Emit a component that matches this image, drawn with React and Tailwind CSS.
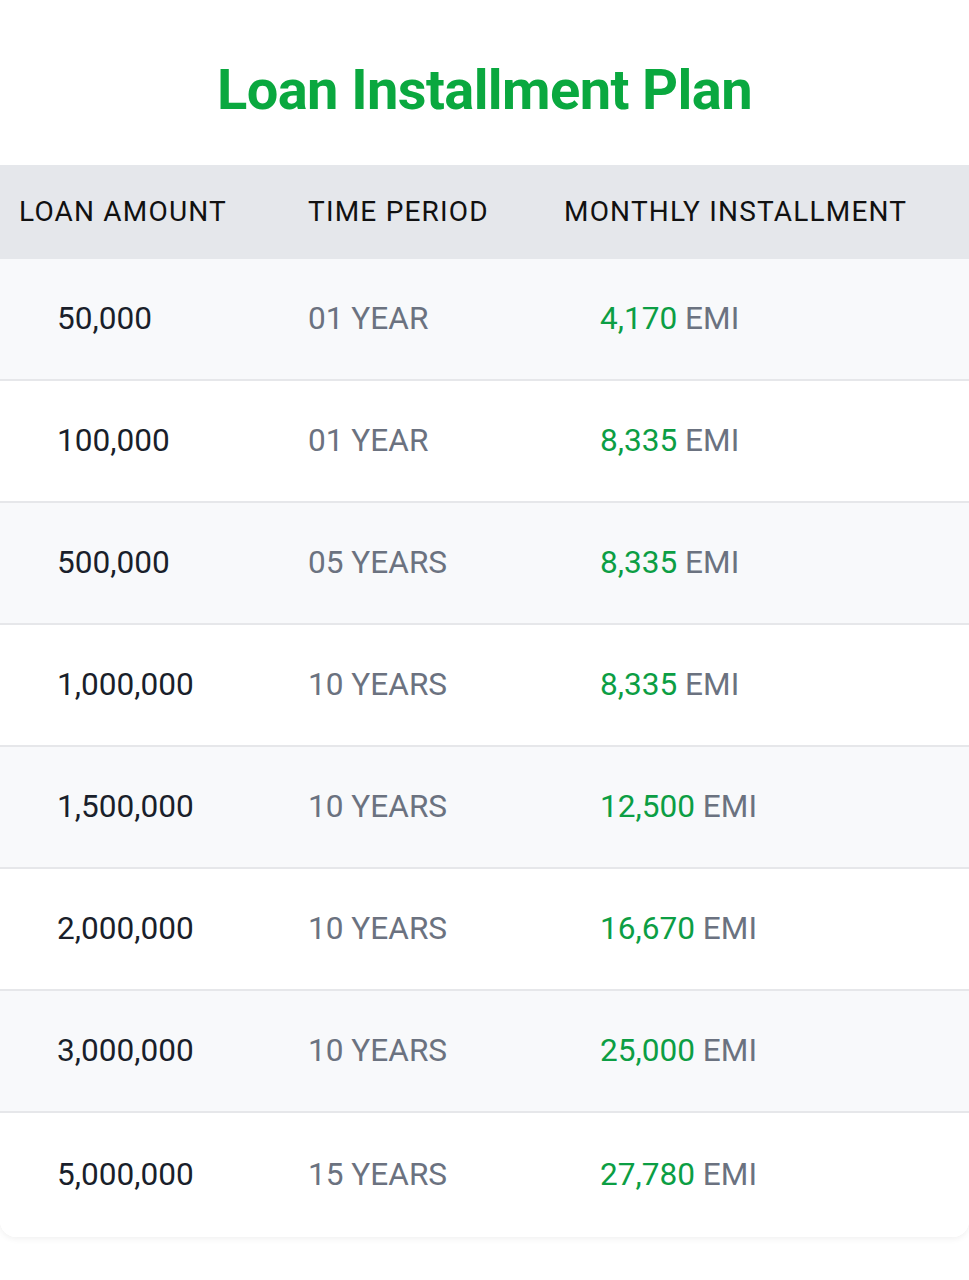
import React from 'react';

// installment rows
const rows = [
    { amount: '50,000', period: '01 YEAR', emi: '4,170' },
    { amount: '100,000', period: '01 YEAR', emi: '8,335' },
    { amount: '500,000', period: '05 YEARS', emi: '8,335' },
    { amount: '1,000,000', period: '10 YEARS', emi: '8,335' },
    { amount: '1,500,000', period: '10 YEARS', emi: '12,500' },
    { amount: '2,000,000', period: '10 YEARS', emi: '16,670' },
    { amount: '3,000,000', period: '10 YEARS', emi: '25,000' },
    { amount: '5,000,000', period: '15 YEARS', emi: '27,780' },
];

function App() {
    return (
        <div className="min-h-screen bg-white" style={{ fontFamily: 'Roboto, "Liberation Sans", sans-serif' }}>
            <div className="bg-white rounded-b-2xl shadow-[0_2px_6px_rgba(0,0,0,0.06)] overflow-hidden">
                {/* Title */}
                <div className="h-[165px] flex items-center justify-center pt-[14px]">
                    <h1 className="text-[56px] font-bold text-[#0aa83f] tracking-[-0.6px] leading-none">
                        Loan Installment Plan
                    </h1>
                </div>

                {/* Header */}
                <div className="grid grid-cols-[289px_256px_1fr] h-[94px] items-center bg-[#e5e7eb] text-[28px] tracking-[1.2px] text-[#111111] leading-none">
                    <div className="pl-[19px]">LOAN AMOUNT</div>
                    <div className="pl-[19px]">TIME PERIOD</div>
                    <div className="pl-[19px]">MONTHLY INSTALLMENT</div>
                </div>

                {/* Rows */}
                {rows.map((row, i) => (
                    <div
                        key={i}
                        className={
                            'grid grid-cols-[289px_256px_1fr] items-center text-[31.6px] leading-none ' +
                            (i % 2 === 0 ? 'bg-[#f8f9fb] ' : 'bg-white ') +
                            (i === rows.length - 1 ? 'h-[124px]' : 'h-[122px] border-b-2 border-[#e6e7ea]')
                        }
                    >
                        <div className="pl-[57px] text-[#1a1f2b]">{row.amount}</div>
                        <div className="pl-[19px] text-[#6b7280]">{row.period}</div>
                        <div className="pl-[55px]">
                            <span className="text-[#0c9e44]">{row.emi}</span>
                            <span className="text-[#6b7280]"> EMI</span>
                        </div>
                    </div>
                ))}
            </div>
        </div>
    );
}

export default App;
